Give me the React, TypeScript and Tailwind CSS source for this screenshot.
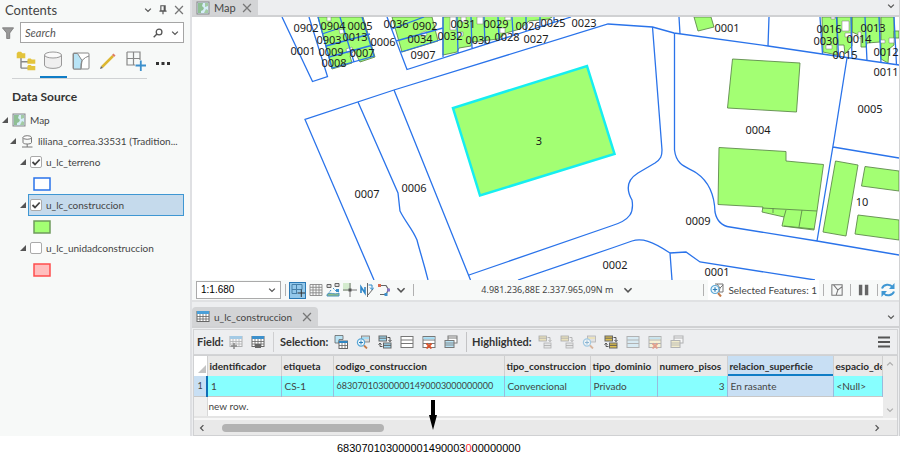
import React from "react";

interface Label {
  text: string;
  x: number;
  y: number;
}

interface Column {
  name: string;
  value: string;
  width: string;
  selected?: boolean;
  numeric?: boolean;
}

const labels: Label[] = [
  { text: "0902", x: 306, y: 32 },
  { text: "0904", x: 333, y: 30 },
  { text: "0005", x: 360, y: 30 },
  { text: "0903", x: 329, y: 44 },
  { text: "0013", x: 355, y: 41 },
  { text: "0001", x: 303, y: 55 },
  { text: "0009", x: 331, y: 56 },
  { text: "0007", x: 362, y: 57 },
  { text: "0008", x: 334, y: 67 },
  { text: "0006", x: 383, y: 46 },
  { text: "0036", x: 396, y: 28 },
  { text: "0902", x: 425, y: 30 },
  { text: "0034", x: 420, y: 43 },
  { text: "0907", x: 423, y: 59 },
  { text: "0031", x: 463, y: 28 },
  { text: "0029", x: 496, y: 28 },
  { text: "0026", x: 528, y: 30 },
  { text: "0025", x: 553, y: 27 },
  { text: "0023", x: 584, y: 27 },
  { text: "0032", x: 450, y: 40 },
  { text: "0030", x: 478, y: 44 },
  { text: "0028", x: 507, y: 41 },
  { text: "0027", x: 536, y: 43 },
  { text: "0001", x: 727, y: 32 },
  { text: "0016", x: 829, y: 33 },
  { text: "0030", x: 826, y: 45 },
  { text: "0013", x: 873, y: 32 },
  { text: "0014", x: 859, y: 43 },
  { text: "0015", x: 845, y: 59 },
  { text: "0012", x: 886, y: 56 },
  { text: "0011", x: 886, y: 76 },
  { text: "0005", x: 870, y: 113 },
  { text: "0004", x: 758, y: 134 },
  { text: "10", x: 862, y: 206 },
  { text: "0009", x: 698, y: 225 },
  { text: "0001", x: 717, y: 276 },
  { text: "0002", x: 615, y: 269 },
  { text: "0006", x: 414, y: 192 },
  { text: "0007", x: 367, y: 198 },
  { text: "3", x: 539, y: 145 },
];

const columns: Column[] = [
  { name: "identificador", value: "1", width: "w-[74px]" },
  { name: "etiqueta", value: "CS-1", width: "w-[52px]" },
  { name: "codigo_construccion", value: "683070103000001490003000000000", width: "w-[171px]" },
  { name: "tipo_construccion", value: "Convencional", width: "w-[86px]" },
  { name: "tipo_dominio", value: "Privado", width: "w-[67px]" },
  { name: "numero_pisos", value: "3", width: "w-[70px]", numeric: true },
  { name: "relacion_superficie", value: "En rasante", width: "w-[106px]", selected: true },
  { name: "espacio_de", value: "<Null>", width: "" },
];

const Icon = ({ children, className = "size-3.5" }: { children: React.ReactNode; className?: string }) => (
  <svg viewBox="0 0 14 14" fill="none" className={`${className} shrink-0`} aria-hidden="true">
    {children}
  </svg>
);

const IconButton = ({ label, children, className = "" }: { label: string; children: React.ReactNode; className?: string }) => (
  <button aria-label={label} className={`flex shrink-0 items-center justify-center ${className}`}>
    {children}
  </button>
);

const Chevron = ({ className = "size-2.5" }: { className?: string }) => (
  <Icon className={className}>
    <path d="M2 4.5l5 5 5-5" stroke="#555" strokeWidth="2.2" />
  </Icon>
);

const CloseIcon = () => (
  <Icon className="size-2.5">
    <path d="M1.5 1.5l11 11M12.5 1.5l-11 11" stroke="#777" strokeWidth="1.8" />
  </Icon>
);

const MapIcon = () => (
  <Icon>
    <rect x="1" y="1" width="12" height="12" fill="#d6edf8" stroke="#858585" />
    <path d="M2 2h5L6 5l2 2-1 2-2 1v2H2z" fill="#8fbf94" />
    <path d="M9 2h3v3L9 6zM10 8l2 1v3H8z" fill="#a3cba4" />
  </Icon>
);

const TableGlyph = ({ accent = "#4a9fd8", faded = false }: { accent?: string; faded?: boolean }) => (
  <g opacity={faded ? 0.45 : 1}>
    <rect x="1" y="1.5" width="12" height="10" fill="#fff" stroke="#666" />
    <path d="M1 2.5h12" stroke={accent} strokeWidth="3" />
    <path d="M1 6.5h12M1 9h12M4 4v7.5M7 4v7.5M10 4v7.5" stroke="#666" strokeWidth="0.8" />
  </g>
);

const RelatedIcon = () => (
  <Icon>
    <path d="M1 .5h8v4H5V8H1z" fill="#b9e3f5" stroke="#666" strokeWidth="0.8" />
    <rect x="5" y="6" width="8.5" height="7.5" fill="#fff" stroke="#666" />
    <path d="M5 7h8.5" stroke="#2f86c4" strokeWidth="2" />
    <path d="M5 10.5h8.5M8 8v5M11 8v5" stroke="#666" strokeWidth="0.8" />
  </Icon>
);

const ZoomIcon = ({ accent = "#a9dcf2" }: { accent?: string }) => (
  <Icon>
    <rect x="5.5" y="1" width="8" height="6" fill="#d8d8d8" stroke="#777" strokeWidth="0.8" />
    <path d="M6 3h7" stroke={accent} strokeWidth="2" />
    <circle cx="5" cy="7.5" r="3.6" fill="#eef8fd" stroke="#5ba7d6" strokeWidth="1.2" />
    <path d="M3 7.5h4M5 5.5v4" stroke="#2f7fb8" />
    <path d="M8 10.5l3 3" stroke="#c47b4a" strokeWidth="1.8" />
  </Icon>
);

const SwitchIcon = ({ accent = "#9fd9f2" }: { accent?: string }) => (
  <Icon>
    <rect x="1" y="1" width="7.5" height="5" fill={accent} stroke="#666" />
    <path d="M1 3.2h7.5" stroke="#666" />
    <rect x="5.5" y="8" width="7.5" height="5" fill={accent} stroke="#666" />
    <path d="M5.5 10.3H13M9.5 2.5H12v4M10.5 5L12 6.7 13.5 5M4.5 11.5H2v-3M.5 9.7L2 8l1.5 1.7" stroke="#555" />
  </Icon>
);

const MoveIcon = ({ accent = "#b9e3f5" }: { accent?: string }) => (
  <Icon>
    <rect x="1" y="1" width="7.5" height="5" fill={accent} stroke="#666" strokeWidth="0.8" />
    <path d="M1 3.2h7.5" stroke="#666" strokeWidth="0.8" />
    <rect x="6" y="8" width="7" height="5" fill="#ddd" stroke="#777" strokeWidth="0.8" />
    <path d="M6 10.5h7M9.5 2.5H12v4M10.5 5L12 6.7 13.5 5" stroke="#666" strokeWidth="0.8" />
  </Icon>
);

const RowsIcon = ({ fill = "#fff", clear = false }: { fill?: string; clear?: boolean }) => (
  <Icon>
    <rect x="1" y="1.5" width="12" height="11" fill={fill} stroke="#777" />
    <path d="M1 5h12M1 8.5h12" stroke="#777" />
    {clear && <path d="M1.500 3.200h11" stroke="#9fd9f2" strokeWidth="2" />}
    {clear && <path d="M4.500 8.500l5 5M9.500 8.500l-5 5" stroke="#d9532c" strokeWidth="1.800" />}
  </Icon>
);

const CopyIcon = ({ accent = "#b9e3f5" }: { accent?: string }) => (
  <Icon>
    <rect x="4" y="1" width="9" height="7" fill="#fff" stroke="#777" />
    <path d="M4 3h9" stroke="#777" />
    <rect x="1" y="5.5" width="9" height="7" fill={accent} stroke="#777" />
    <path d="M1 8h9M1 10h9" stroke="#777" strokeWidth="0.8" />
  </Icon>
);

const Divider = () => <span className="h-3 w-px shrink-0 bg-[#b0b0b0]" />;

const Expander = ({ label }: { label: string }) => (
  <button aria-label={`Collapse ${label}`} className="shrink-0">
    <svg viewBox="0 0 6 6" className="size-1.5" aria-hidden="true">
      <path d="M6 0v6H0z" fill="#555" />
    </svg>
  </button>
);

const Swatch = ({ className }: { className: string }) => (
  <div className="flex h-[21px] items-center pl-[33px]">
    <svg viewBox="0 0 18 14" className={`h-3.5 w-[18px] stroke-[1.5] ${className}`} aria-hidden="true">
      <rect x="1" y="1" width="16" height="12" />
    </svg>
  </div>
);

const Layer = ({ name, checked = false, active = false }: { name: string; checked?: boolean; active?: boolean }) => (
  <div className="flex h-[22px] items-center gap-0.5 pl-5">
    <Expander label={name} />
    <label
      className={`flex h-[22px] flex-1 items-center gap-1 border pl-px ${
        active ? "border-[#3f97d3] bg-[#c5daec]" : "border-transparent"
      }`}
    >
      <span className="grid size-3 shrink-0 place-items-center">
        <input
          type="checkbox"
          defaultChecked={checked}
          className="peer col-start-1 row-start-1 size-3 appearance-none rounded-xs border border-[#aaa] bg-white"
        />
        <svg
          viewBox="0 0 12 12"
          className="pointer-events-none invisible col-start-1 row-start-1 size-3 peer-checked:visible"
          aria-hidden="true"
        >
          <path d="M2.5 6L5 8.500l4.700-5" fill="none" stroke="#444" strokeWidth="1.800" />
        </svg>
      </span>
      {name}
    </label>
  </div>
);

const Contents = () => (
  <aside className="w-[192px] shrink-0 border-r-2 border-[#dfe0e3] bg-[#f7f9f8] pr-1.5 text-[10px]">
    <div className="flex h-[22px] items-center gap-1.5 pb-0.5 pl-[5px]">
      <h1 className="flex-1 text-[13px]">Contents</h1>
      <IconButton label="Options">
        <Chevron className="size-2" />
      </IconButton>
      <IconButton label="Pin">
        <Icon className="size-2.5">
          <path d="M4 1h6v7H4zM2 8.500h10M7 8.500V13M8.700 1v7" stroke="#555" strokeWidth="1.600" />
        </Icon>
      </IconButton>
      <IconButton label="Close">
        <CloseIcon />
      </IconButton>
    </div>

    <div className="flex items-center gap-1.5 pl-0.5">
      <IconButton label="Filter">
        <Icon className="size-3">
          <path d="M.5 1h13L9 7v6.500H5.500V7z" fill="#999" stroke="#777" />
        </Icon>
      </IconButton>
      <div className="flex h-[21px] min-w-0 flex-1 items-center gap-2 border border-[#a5a5a5] bg-white px-1">
        <input
          aria-label="Search"
          placeholder="Search"
          className="min-w-0 flex-1 text-[11px] italic placeholder-[#555] outline-none"
        />
        <IconButton label="Search contents">
          <Icon className="size-2.5">
            <circle cx="8.500" cy="5.500" r="4" stroke="#555" strokeWidth="1.800" />
            <path d="M5.500 8.500L1 13" stroke="#555" strokeWidth="2" />
          </Icon>
        </IconButton>
        <IconButton label="Search options">
          <Chevron className="size-2" />
        </IconButton>
      </div>
    </div>

    {/* List view tabs */}
    <div className="mr-[37px] ml-3 flex h-9 justify-between border-b border-[#d0d2d4]">
      <IconButton label="Drawing order" className="w-[27px]">
        <Icon className="size-5">
          <path d="M3.500 4v8M3.500 7.500H9M3.500 12H9" stroke="#888" />
          <path d="M.5 1.500l1-1h2l1 1h2V5h-6zM8 6l.7-.7h1.600L11 6h2.500v3H8zM8 10.500l.7-.7h1.600l.7.7h2.500v3H8z" fill="#e3c43c" />
        </Icon>
      </IconButton>
      <IconButton label="Data source" className="w-[27px] border-b-2 border-[#0f7dc6]">
        <svg viewBox="0 0 20 20" className="size-5" fill="#efefef" stroke="#999" aria-hidden="true">
          <path d="M1.500 5v10c0 4.500 17 4.500 17 0V5" />
          <ellipse cx="10" cy="5" rx="8.500" ry="3" fill="#fafafa" />
        </svg>
      </IconButton>
      <IconButton label="Selection" className="w-[27px]">
        <svg viewBox="0 0 18 18" className="size-[18px]" fill="none" stroke="#888" aria-hidden="true">
          <rect x="1" y="1" width="16" height="16" rx="1" fill="#fff" />
          <path d="M1.500 1.500h4L10 8.500 9 12v5H1.500z" fill="#b8e4f6" />
          <path d="M10 8.500l3.500-3L17 4M10 8.500l-1 8" />
        </svg>
      </IconButton>
      <IconButton label="Editing" className="w-[27px]">
        <svg viewBox="0 0 18 18" className="size-[18px]" aria-hidden="true">
          <path d="M3 15L14 4" stroke="#dcb732" strokeWidth="2.500" />
          <path d="M14 4l1.500-1.500" stroke="#df7c66" strokeWidth="3" />
          <path d="M1 17l1-3 2 2z" fill="#666" />
        </svg>
      </IconButton>
      <IconButton label="Snapping" className="w-[27px]">
        <svg viewBox="0 0 20 20" className="size-5" fill="none" aria-hidden="true">
          <path d="M1 1h13v8M1 1v13h8M7.500 1v13M1 7.500h13" stroke="#888" strokeWidth="1.200" />
          <path d="M9.500 14.500H20M14.800 9.500V20" stroke="#3c90cc" strokeWidth="1.800" />
        </svg>
      </IconButton>
      <IconButton label="More" className="-mr-[30px] w-[27px] pt-1">
        <svg viewBox="0 0 14 4" className="w-3.5" fill="#333" aria-hidden="true">
          <rect x="0" y="1" width="3" height="3" />
          <rect x="5.500" y="1" width="3" height="3" />
          <rect x="11" y="1" width="3" height="3" />
        </svg>
      </IconButton>
    </div>

    <h2 className="mt-2 mb-0.5 pl-3 text-[12px] leading-5 font-bold text-[#333]">Data Source</h2>
    <div className="flex h-[21px] items-center gap-1 pl-0.5">
      <Expander label="Map" />
      <MapIcon />
      Map
    </div>
    <div className="flex h-[21px] items-center gap-1 pl-2.5">
      <Expander label="database" />
      <Icon>
        <path d="M3 3.500v5c0 2 8.500 2 8.500 0v-5M7.200 10v3M2 13h10.500" stroke="#777" />
        <ellipse cx="7.200" cy="3.500" rx="4.200" ry="1.800" fill="#fff" stroke="#777" />
      </Icon>
      <span className="whitespace-nowrap">liliana_correa.33531 (Tradition...</span>
    </div>
    <Layer name="u_lc_terreno" checked />
    <Swatch className="fill-white stroke-[#2a73ea]" />
    <Layer name="u_lc_construccion" checked active />
    <Swatch className="fill-[#a3ff73] stroke-[#6f9a5c]" />
    <Layer name="u_lc_unidadconstruccion" />
    <Swatch className="fill-[#ffbebe] stroke-[#ff4d4d]" />
  </aside>
);

const ParcelMap = () => (
  <svg
    viewBox="192 17 707 263"
    preserveAspectRatio="xMidYMid slice"
    className="h-[263px] w-full bg-white"
    role="img"
    aria-label="Parcel map"
  >
    {/* Buildings */}
    <g fill="#a3ff73" stroke="#5f8a4c" strokeWidth="0.9">
      <path d="M318 17L332 69 352 63 350 56 354 50 360 62 375 57 363 17z" />
      <path d="M392 17L402 52 438 41 432 17zM443 17v38l14-3 2-4 12-2 1-4 26-3 8-6 14-4 9-8 20-2 6-4z" />
      <path d="M694 17l4 14 16-4-3-10z" />
      <path d="M822 17l1 35 14 3V17zM837 17l1 28h6l1 9 7-8V17zM852 17v15l9 4v11h5l1-4 13-1V17zM881 17v42l7 4 1-14 5-4V17z" />
      <path d="M894 31h5v7h-5zM732.5 59l67.5 4-3.500 49-69-4z" />
      <path d="M719 147.500l67 4v9.500l37.500 3.500L817 211l-3 19-32-4 2-9-22-5 1-5-45-2.500z" />
      <path d="M762 208l55 3M773 208v5M784 217l2-7M784 226l30 3M799 227l3-17" fill="none" />
      <path d="M835.500 161l22.500 4-12 71-23-4zM865 166.500l34 4.500v20l-37.500-5zM858 215l41 5v20l-44-6z" />
    </g>
    <g fill="#fff" stroke="#777" strokeWidth="0.5">
      <path d="M339 30l4-1 1 4-4 1zM346 49l6-2 1 5-6 1zM327 17h4v4h-4zM421 33l5-2 1 4-5 2zM450 17h6v13h-6zM477 17h6v7h-6zM505 17h6v3h-6zM458 32h5v4h-5zM461 17h5v5h-5zM500 28h5v5h-5z" />
      <path d="M826 45h6v4h-6zM842 21h7v10h-7zM845 33h6v4h-6zM858 32h3v6h-3zM889 38h5v5h-5zM880 40h5v3h-5zM831 17h4v2h-4z" />
    </g>

    {/* Parcel boundaries */}
    <g fill="none" stroke="#2a73ea" strokeWidth="1.300">
      <path d="M282 17l30.500 64.500 15-5L309 17M318 17l14 51 42-12-12-39M340 17l14 45M322 34l18-6M326 46l44-12M329 57l44-12" />
      <path d="M387 17l20 52.500L571 17M396 41l47-13M401 52l42-13M392 29l32-12M443 17v40M457 17l1 36M471 17l1 31M484 17l1 27M498 17l1 22M512 17l1 18M526 17v14M540 17v10M554 17v5" />
      <path d="M374 280l-69-160.500L394 90 608 24l44.500 3L674 33l94 13 54 8 77 11" />
      <path d="M358 102l40 91 2 18c6 12 12 17 17 29 3 12 6 20 11 40M394 90l76.500 190M469 275l142-49c20-6 23-14 21-26-8-14-2-22 6-27l17-10c6-4 7-7 7-13L652.500 27" />
      <path d="M518 280l94-32 20-7c10-3 20 0 38 12l2 27M670 253l16-1 14 10 115 18" />
      <path d="M674.500 33v117c2 17 14 17 22 23 13 9 18 22 18.500 39 2 10 7 14 15 15l87 14 82 14M847 58l-13 82-17 101M833 147l66 11" />
      <path d="M679 17l1 17M769 17l-1 29M820 17l2.500 37M836.500 17l2 39M851 17l1 41M865 17l2 44M879 17l2 46M894 17l2.500 48" />
    </g>

    {/* Selected feature */}
    <path d="M587 66l27.500 88L480 195.500 453 108z" fill="#a3ff73" stroke="#16eef0" strokeWidth="2.500" />

    <g fill="#1c1c1c" textAnchor="middle" className="font-['Noto_Sans',sans-serif] text-[11px]">
      {labels.map((label, i) => (
        <text key={i} x={label.x} y={label.y}>
          {label.text}
        </text>
      ))}
    </g>
  </svg>
);

const StatusBar = () => (
  <div className="flex h-[22px] items-center border-b-2 border-[#e0e1e3] bg-[#f7f9f8] pr-1 pl-1 text-[10px]">
    <div className="grid h-[18px] w-[85px] shrink-0 items-center border border-[#aaa] bg-white">
      <select
        aria-label="Map scale"
        className="col-start-1 row-start-1 w-full appearance-none pl-1 font-['Liberation_Sans',sans-serif] text-[10px] text-black"
      >
        <option>1:1.680</option>
      </select>
      <span className="pointer-events-none col-start-1 row-start-1 mr-1 justify-self-end">
        <Chevron className="size-2" />
      </span>
    </div>
    <div className="flex flex-1 items-center gap-[3px] pl-1">
      <Divider />
      <IconButton label="Snap grid" className="size-[17px] border border-[#2979b5] bg-[#93c8ea]">
        <Icon>
          <path d="M1 1.500h10v5M1 1.500v9h5M5.500 1.500v9M1 6.500h10" stroke="#4780a8" />
          <path d="M6.500 10H14M10.300 6.500V14" stroke="#333" />
        </Icon>
      </IconButton>
      <IconButton label="Grid">
        <Icon>
          <path d="M1 1.500h12v11H1zM1 4.300h12M1 7h12M1 9.800h12M4 1.500v11M7 1.500v11M10 1.500v11" stroke="#888" strokeWidth="0.900" />
        </Icon>
      </IconButton>
      <IconButton label="Vertices">
        <Icon>
          <path d="M1 1.500h4v3H1zM9 .5h4v3H9z" stroke="#666" fill="#ddd" />
          <path d="M2 11l3-4M7 5l4 4" stroke="#3c90cc" strokeDasharray="2 1" />
          <path d="M1 11.500c4-3 7 1 12-1.500v3H1z" fill="#91bd82" stroke="#4b94bf" />
          <path d="M10 6h3v3h-3z" fill="#3c90cc" />
        </Icon>
      </IconButton>
      <IconButton label="Dynamic constraints">
        <Icon>
          <rect width="8" height="8" fill="#d4ebce" />
          <path d="M7 0v14M0 7h14" stroke="#777" />
          <rect x="5.500" y="5.500" width="3" height="3" fill="#555" />
        </Icon>
      </IconButton>
      <IconButton label="Corrections">
        <Icon>
          <path d="M1 10V4l4 6V4" stroke="#2d86c8" strokeWidth="1.600" />
          <path d="M7.500 0v14M8 12l5-6" stroke="#666" />
          <path d="M8.500 2h3.500v4M10 4.500L12 6.700l2-2.200" stroke="#2d86c8" />
        </Icon>
      </IconButton>
      <IconButton label="Snapping">
        <Icon>
          <path d="M3 2.500h6l2.500 4L9 11.500H3" stroke="#666" strokeWidth="1.200" />
          <path d="M1 1h3v3H1z" fill="#d9694e" />
          <path d="M10 5.500h3v3h-3z" fill="#8774c4" />
          <path d="M7.500 10h3v3h-3z" fill="#3c90cc" />
        </Icon>
      </IconButton>
      <IconButton label="Snapping options" className="mr-1 ml-0.5">
        <Chevron />
      </IconButton>
      <Divider />
    </div>
    <span className="mr-2.5 font-['Noto_Sans',sans-serif] text-[9px] whitespace-nowrap">4.981.236,88E 2.337.965,09N m</span>
    <IconButton label="Coordinate format">
      <Chevron />
    </IconButton>
    <div className="ml-[70px] flex items-center gap-1">
      <Divider />
      <button className="flex h-5 items-center gap-1 bg-white px-0.5 whitespace-nowrap">
        <Icon>
          <path d="M5 1h8v8H9M7 1l3 4 3-3M10 5L9 9" stroke="#777" />
          <circle cx="5" cy="6.500" r="4" fill="#eef8fd" stroke="#5ba7d6" strokeWidth="1.200" />
          <path d="M2.800 6.500h4.400M5 4.300v4.400" stroke="#2f7fb8" strokeWidth="1.200" />
          <path d="M8 10l3 3.500" stroke="#c47b4a" strokeWidth="2" />
        </Icon>
        Selected Features: 1
      </button>
    </div>
    <div className="ml-1 flex items-center gap-[7px]">
      <Divider />
      <IconButton label="Selection options">
        <Icon className="size-3">
          <path d="M1 1h12v12H1zM3 1l5 6 5-4M8 7l-2 6" stroke="#777" strokeWidth="1.200" />
        </Icon>
      </IconButton>
      <Divider />
      <IconButton label="Pause drawing">
        <Icon className="size-3">
          <path d="M1 1h4v12H1zM8 1h4v12H8z" fill="#666" />
        </Icon>
      </IconButton>
      <Divider />
      <IconButton label="Refresh" className="-ml-1">
        <Icon>
          <path d="M1 5.500C2.500 1 9 .5 11.500 4M13 8.500C11.500 13 5 13.500 2.500 10" stroke="#3f97d3" strokeWidth="2" />
          <path d="M13.500 0v6H8zM.5 14V8H6z" fill="#3f97d3" />
        </Icon>
      </IconButton>
    </div>
  </div>
);

const TableToolbar = () => (
  <div className="flex h-[26px] items-center border border-[#d3d4d6] bg-[#edeef0] pr-1.5 pl-[3px] text-[11px] text-[#333]">
    <b className="w-8">Field:</b>
    <div className="flex items-center gap-2">
      <IconButton label="Add field">
        <Icon>
          <TableGlyph faded />
          <path d="M2 11h6M5 8v6" stroke="#888" strokeWidth="1.500" />
        </Icon>
      </IconButton>
      <IconButton label="Calculate field">
        <Icon>
          <TableGlyph accent="#3c90cc" />
          <rect x="4" y="9" width="6" height="4" fill="#666" />
        </Icon>
      </IconButton>
      <span className="h-5 w-px bg-[#cfcfd1]" />
    </div>
    <b className="ml-1.5 w-[54px]">Selection:</b>
    <div className="flex items-center gap-2">
      <IconButton label="Select by attributes"><RelatedIcon /></IconButton>
      <IconButton label="Zoom to selection"><ZoomIcon /></IconButton>
      <IconButton label="Switch selection"><SwitchIcon /></IconButton>
      <IconButton label="Select all"><RowsIcon /></IconButton>
      <IconButton label="Clear selection"><RowsIcon clear /></IconButton>
      <IconButton label="Copy rows"><CopyIcon /></IconButton>
      <span className="h-5 w-px bg-[#c3c3c5]" />
    </div>
    <b className="ml-[5px] w-[66px]">Highlighted:</b>
    <div className="flex flex-1 items-center gap-2">
      <IconButton label="Select highlighted" className="opacity-50"><MoveIcon accent="#e8d68a" /></IconButton>
      <IconButton label="Unselect highlighted" className="opacity-50"><MoveIcon accent="#e8d68a" /></IconButton>
      <IconButton label="Zoom to highlighted" className="opacity-50"><ZoomIcon accent="#e8d68a" /></IconButton>
      <IconButton label="Switch highlighted"><SwitchIcon accent="#dfc04e" /></IconButton>
      <IconButton label="Highlight all" className="opacity-50"><RowsIcon fill="#c4e8f6" /></IconButton>
      <IconButton label="Clear highlighted" className="opacity-50"><RowsIcon fill="#fff3b5" clear /></IconButton>
      <IconButton label="Copy highlighted" className="opacity-50"><CopyIcon accent="#f5e9a8" /></IconButton>
    </div>
    <IconButton label="Table menu">
      <Icon>
        <path d="M1 2.500h12M1 7h12M1 11.500h12" stroke="#555" strokeWidth="2.200" />
      </Icon>
    </IconButton>
  </div>
);

const AttributeTable = () => (
  <div className="relative border border-[#d0d1d3] bg-[#e9e9e9]">
    <div className="flex border-b-2 border-[#f7f7f7]">
      <div className="min-w-0 flex-1 overflow-hidden bg-white">
        <table className="w-full table-fixed border-collapse text-left whitespace-nowrap">
          <thead>
            <tr className="h-5 bg-[#e9e9e9] text-[10px] text-[#2b2b2b]">
              <td className="w-[13px] border-r border-[#cfcfcf] bg-white">
                <svg viewBox="0 0 8 8" className="mt-1.5 ml-1 size-2" aria-hidden="true">
                  <path d="M8 0v8H0z" fill="#c4c4c4" />
                </svg>
              </td>
              {columns.map((col) => (
                <th
                  key={col.name}
                  scope="col"
                  className={`overflow-hidden border-r border-[#cfcfcf] pl-0.5 font-bold ${col.width} ${
                    col.selected ? "bg-[#c8dff4] shadow-[inset_0_-2px_0_#0f7dc6]" : ""
                  }`}
                >
                  {col.name}
                </th>
              ))}
            </tr>
          </thead>
          <tbody>
            <tr className="h-5 border-b border-[#c8c8c8] text-[10px]">
              <th scope="row" className="border-r-2 border-[#0f6fb8] bg-[#c8dff4] text-center text-[9px] font-normal">
                1
              </th>
              {columns.map((col) => (
                <td
                  key={col.name}
                  className={`overflow-hidden border-r border-[#9bd] pl-[3px] ${
                    col.selected ? "bg-[#c8dff4]" : "bg-[#87ffff]"
                  } ${col.numeric ? "pr-0.5 text-right" : ""} ${col.name === "codigo_construccion" ? "text-[9px]" : ""}`}
                >
                  {col.value}
                </td>
              ))}
            </tr>
            <tr className="h-[21px] border-b-2 border-[#e4e4e4] text-[10px]">
              <td className="border-r border-[#d8d8d8] bg-[#f0f0f0]" />
              <td colSpan={8} className="pl-px">new row.</td>
            </tr>
          </tbody>
        </table>
      </div>
      <div className="flex w-3.5 flex-col items-center justify-between bg-[#f0f0f0] py-1 opacity-40">
        <span className="rotate-180"><Chevron className="size-2" /></span>
        <Chevron className="size-2" />
      </div>
    </div>
    <div className="flex h-[15px] items-center px-1">
      <IconButton label="Scroll left" className="w-2 rotate-90">
        <Chevron className="size-2" />
      </IconButton>
      <span className="ml-4 h-2 w-[162px] rounded-full bg-[#b3b3b3]" />
      <IconButton label="Scroll right" className="mr-3 ml-auto w-2 -rotate-90">
        <Chevron className="size-2" />
      </IconButton>
    </div>
    {/* Arrow from the code to the annotation below */}
    <svg viewBox="0 0 8 30" className="absolute top-[44px] left-[235px] h-[30px] w-2" aria-hidden="true">
      <path d="M2 0h4v15h2L4 30 0 15h2z" fill="#000" />
    </svg>
  </div>
);

const App: React.FC = () => {
  return (
    <div className="bg-white font-['Lato',sans-serif] leading-4 text-[#444]">
      <div className="flex bg-[#edeef0]">
        <Contents />
        <main className="min-w-0 flex-1 border-r border-[#d0d1d3]">
          <div className="flex h-[17px] items-start justify-between border-b-2 border-[#d0d1d3] pr-1">
            <div className="flex h-[15px] items-center bg-[#d3d4d6] pr-1.5 pl-1 text-[11px]">
              <MapIcon />
              <span className="mr-1.5 ml-1">Map</span>
              <IconButton label="Close map"><CloseIcon /></IconButton>
            </div>
            <IconButton label="Map views" className="mt-0.5">
              <Chevron className="size-2" />
            </IconButton>
          </div>
          <ParcelMap />
          <StatusBar />

          <div className="mt-[5px] flex items-center justify-between border-b-2 border-[#d0d1d3] pr-1">
            <div className="flex h-[19px] items-center rounded-t-sm bg-[#d3d4d6] pr-1.5 pl-1 text-[10px]">
              <Icon><TableGlyph /></Icon>
              <span className="mr-2.5 ml-1">u_lc_construccion</span>
              <IconButton label="Close table"><CloseIcon /></IconButton>
            </div>
            <IconButton label="Tables">
              <Chevron className="size-2" />
            </IconButton>
          </div>
          <div className="px-px pt-px">
            <TableToolbar />
            <AttributeTable />
          </div>
        </main>
      </div>
      <p className="pt-1 pb-2.5 pl-[337px] font-['Liberation_Sans',sans-serif] text-[11px] text-black">
        683070103000001490003<span className="text-red-500">0</span>00000000
      </p>
    </div>
  );
};

export default App;
